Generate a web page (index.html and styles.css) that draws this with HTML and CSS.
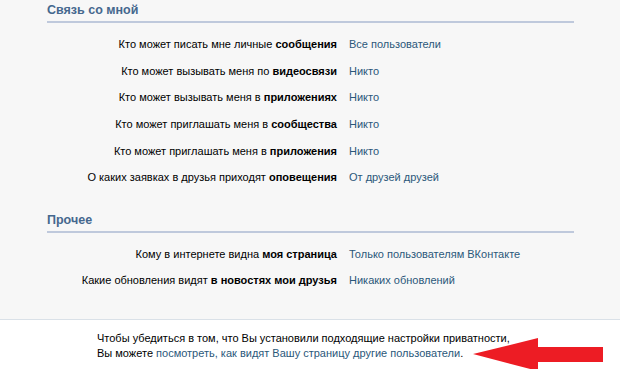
FILE: index.html
```html
<!DOCTYPE html>
<html lang="ru">

<head>
    <meta charset="UTF-8">
    <title>Приватность</title>
    <link rel="stylesheet" href="styles.css">
</head>

<body>
    <div class="settings">
        <div class="section">
            <h2 class="section-title">Связь со мной</h2>
            <div class="row">
                <div class="row-label">Кто может писать мне личные <b>сообщения</b></div>
                <a class="row-value" href="#">Все пользователи</a>
            </div>
            <div class="row">
                <div class="row-label">Кто может вызывать меня по <b>видеосвязи</b></div>
                <a class="row-value" href="#">Никто</a>
            </div>
            <div class="row">
                <div class="row-label">Кто может вызывать меня в <b>приложениях</b></div>
                <a class="row-value" href="#">Никто</a>
            </div>
            <div class="row">
                <div class="row-label">Кто может приглашать меня в <b>сообщества</b></div>
                <a class="row-value" href="#">Никто</a>
            </div>
            <div class="row">
                <div class="row-label">Кто может приглашать меня в <b>приложения</b></div>
                <a class="row-value" href="#">Никто</a>
            </div>
            <div class="row">
                <div class="row-label">О каких заявках в друзья приходят <b>оповещения</b></div>
                <a class="row-value" href="#">От друзей друзей</a>
            </div>
        </div>

        <div class="section">
            <h2 class="section-title">Прочее</h2>
            <div class="row">
                <div class="row-label">Кому в интернете видна <b>моя страница</b></div>
                <a class="row-value" href="#">Только пользователям ВКонтакте</a>
            </div>
            <div class="row">
                <div class="row-label">Какие обновления видят <b>в новостях мои друзья</b></div>
                <a class="row-value" href="#">Никаких обновлений</a>
            </div>
        </div>
    </div>

    <div class="footer">
        <p>Чтобы убедиться в том, что Вы установили подходящие настройки приватности,</p>
        <p>Вы можете <a href="#">посмотреть, как видят Вашу страницу другие пользователи</a>.</p>
        <svg class="arrow" width="131" height="33" viewBox="0 0 131 33">
            <polygon points="0,16 65,0 65,9 130,9 130,24 65,24 65,33" fill="#ed1c24" />
        </svg>
    </div>
</body>

</html>
```

FILE: styles.css
```css
body {
    font-family: 'Liberation Sans', Arial, sans-serif;
    font-size: 11px;
    margin: 0;
    background-color: #f7f7f7;
    color: #000;
}

a {
    color: #2b587a;
    text-decoration: none;
}

.settings {
    padding: 0 46px 25px 47px;
    width: 527px;
}

.section + .section {
    margin-top: 19px;
}

.section-title {
    margin: 0 0 8px;
    padding: 3px 0 4px;
    font-size: 12.5px;
    font-weight: bold;
    color: #45688e;
    border-bottom: 2px solid #bfc9dc;
    line-height: 14px;
}

.row {
    display: flex;
    align-items: center;
    height: 26.6px;
}

.row-label {
    width: 290px;
    text-align: right;
    margin-right: 12px;
}

.footer {
    position: relative;
    background-color: #fff;
    border-top: 1px solid #dae1e8;
    padding: 11px 0 20px 97px;
    line-height: 15px;
}

.footer p {
    margin: 0;
}

.arrow {
    position: absolute;
    left: 473px;
    top: 18px;
}
```
